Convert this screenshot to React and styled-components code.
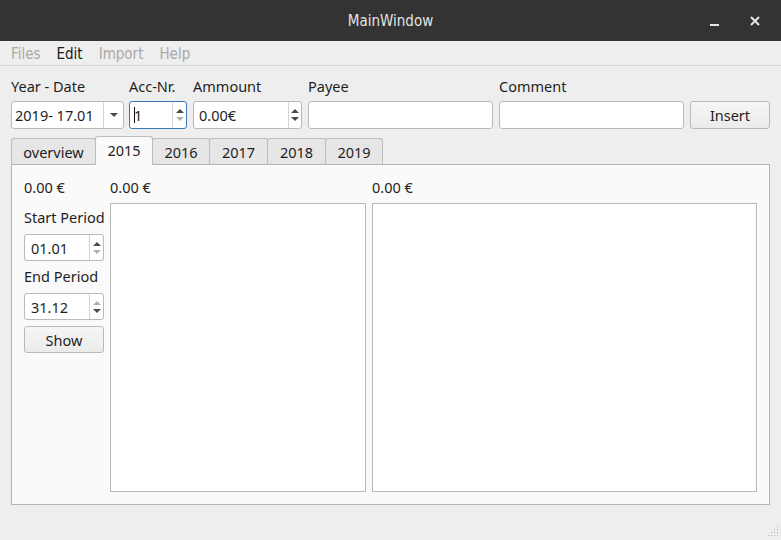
import React from "react";
import styled, { createGlobalStyle } from "styled-components";

const GlobalStyle = createGlobalStyle`
  html, body {
    margin: 0;
    padding: 0;
    background: #eeeeee;
    overflow: hidden;
  }
  * {
    box-sizing: border-box;
  }
`;

const Window = styled.div`
  width: 781px;
  height: 540px;
  display: flex;
  flex-direction: column;
  background: #eeeeee;
  font-family: "Noto Sans", "Open Sans", sans-serif;
  font-size: 14.5px;
  color: #1e1e1e;
  position: relative;
`;

const TitleBar = styled.div`
  height: 41px;
  flex-shrink: 0;
  background: #333333;
  display: grid;
  grid-template-columns: 1fr auto 1fr;
  align-items: center;
  font-family: "DejaVu Sans Condensed", "DejaVu Sans", sans-serif;
`;

const Title = styled.div`
  grid-column: 2;
  color: #e4e4e4;
  font-size: 15px;
`;

const WindowControls = styled.div`
  grid-column: 3;
  justify-self: end;
  display: flex;
  align-items: center;
  gap: 20px;
  padding-right: 16px;
`;

const ControlButton = styled.div`
  width: 20px;
  height: 20px;
  display: flex;
  align-items: center;
  justify-content: center;
`;

const MenuBar = styled.div`
  height: 25px;
  flex-shrink: 0;
  display: flex;
  align-items: center;
  gap: 16px;
  padding: 2px 0 0 11px;
  border-bottom: 1px solid #d8d8d8;
  font-family: "DejaVu Sans Condensed", "DejaVu Sans", sans-serif;
  font-size: 15px;
`;

const MenuItem = styled.span`
  color: ${(p) => (p.$enabled ? "#1a1a1a" : "#a9a9a9")};
`;

const Form = styled.div`
  display: flex;
  padding: 10px 11px 0 11px;
  align-items: flex-end;
`;

const Field = styled.div`
  display: flex;
  flex-direction: column;
  gap: 5px;
  width: ${(p) => p.$w}px;
  margin-left: ${(p) => p.$gap ?? 0}px;
`;

const Label = styled.div`
  height: 20px;
  line-height: 20px;
  white-space: nowrap;
`;

const Box = styled.div`
  height: ${(p) => p.$h ?? 28}px;
  border: 1px solid ${(p) => (p.$focus ? "#3b78b8" : "#b9b9b9")};
  border-radius: 3px;
  background: #ffffff;
  display: flex;
  align-items: stretch;
`;

const BoxText = styled.div`
  flex: 1;
  display: flex;
  align-items: center;
  padding-left: ${(p) => p.$pad ?? 5}px;
  white-space: nowrap;
`;

const Caret = styled.span`
  display: inline-block;
  width: 1px;
  height: 16px;
  background: #111;
  margin-right: -1px;
`;

const ComboButton = styled.div`
  width: 20px;
  border-left: 1px solid #d4d4d4;
  display: flex;
  align-items: center;
  justify-content: center;
`;

const SpinButtons = styled.div`
  width: ${(p) => p.$w ?? 14}px;
  border-left: 1px solid #d4d4d4;
  display: flex;
  flex-direction: column;
  align-items: center;
  justify-content: center;
  gap: 4px;
`;

const Arrow = styled.div`
  width: 0;
  height: 0;
  border-left: 4px solid transparent;
  border-right: 4px solid transparent;
  ${(p) =>
    p.$up
      ? `border-bottom: 4px solid ${p.$dim ? "#b0b0b0" : "#4a4a4a"};`
      : `border-top: 4px solid ${p.$dim ? "#b0b0b0" : "#4a4a4a"};`}
`;

const Button = styled.div`
  height: ${(p) => p.$h ?? 28}px;
  border: 1px solid #b9b9b9;
  border-radius: 3px;
  background: linear-gradient(#f6f6f6, #ebebeb);
  display: flex;
  align-items: center;
  justify-content: center;
`;

const TabArea = styled.div`
  margin: 7px 11px 0 11px;
  display: flex;
  flex-direction: column;
`;

const TabBar = styled.div`
  display: flex;
  align-items: flex-end;
  height: 29px;
  margin-bottom: -1px;
  position: relative;
  z-index: 1;
`;

const Tab = styled.div`
  height: ${(p) => (p.$active ? 29 : 27)}px;
  width: ${(p) => p.$w}px;
  display: flex;
  align-items: center;
  justify-content: center;
  border: 1px solid #bdbdbd;
  border-bottom: ${(p) => (p.$active ? "none" : "1px solid #b5b5b5")};
  margin-left: ${(p) => (p.$first ? 0 : -1)}px;
  border-radius: 3px 3px 0 0;
  background: ${(p) => (p.$active ? "#fafafa" : "#e6e6e6")};
  padding-bottom: ${(p) => (p.$active ? 2 : 0)}px;
`;

const Pane = styled.div`
  height: 341px;
  border: 1px solid #b5b5b5;
  background: #fafafa;
  display: flex;
  gap: 6px;
  padding: 12px 12px 12px 12px;
`;

const SideColumn = styled.div`
  width: 80px;
  display: flex;
  flex-direction: column;
`;

const Amount = styled.div`
  height: 20px;
  line-height: 20px;
  margin-bottom: 6px;
  white-space: nowrap;
`;

const SideLabel = styled.div`
  height: 20px;
  line-height: 20px;
  margin: ${(p) => p.$top}px 0 7px;
  white-space: nowrap;
`;

const ShowButton = styled(Button)`
  margin-top: 6px;
`;

const ListColumn = styled.div`
  width: ${(p) => p.$w}px;
  display: flex;
  flex-direction: column;
`;

const ListBox = styled.div`
  flex: 1;
  border: 1px solid #b9b9b9;
  background: #ffffff;
`;

const SizeGrip = styled.svg`
  position: absolute;
  right: 2px;
  bottom: 2px;
`;

const Spin = ({ value, upDim, downDim, focus, caret, pad, btn, h }) => (
  <Box $focus={focus} $h={h}>
    <BoxText $pad={pad}>
      {caret && <Caret />}
      {value}
    </BoxText>
    <SpinButtons $w={btn}>
      <Arrow $up $dim={upDim} />
      <Arrow $dim={downDim} />
    </SpinButtons>
  </Box>
);

const tabs = [
  { label: "overview", w: 85 },
  { label: "2015", w: 58, active: true },
  { label: "2016", w: 58 },
  { label: "2017", w: 59 },
  { label: "2018", w: 59 },
  { label: "2019", w: 58 },
];

const gripDots = [
  [12, 2],
  [9, 5],
  [12, 5],
  [6, 8],
  [9, 8],
  [12, 8],
  [3, 11],
  [6, 11],
  [9, 11],
  [12, 11],
];

export default function App() {
  return (
    <Window>
      <GlobalStyle />
      <TitleBar>
        <Title>MainWindow</Title>
        <WindowControls>
          <ControlButton>
            <svg width="12" height="12" viewBox="0 0 12 12">
              <rect x="1" y="9" width="9" height="2" fill="#e6e6e6" />
            </svg>
          </ControlButton>
          <ControlButton>
            <svg width="12" height="12" viewBox="0 0 12 12">
              <path d="M2 2 L10 10 M10 2 L2 10" stroke="#e6e6e6" strokeWidth="2" />
            </svg>
          </ControlButton>
        </WindowControls>
      </TitleBar>

      <MenuBar>
        <MenuItem>Files</MenuItem>
        <MenuItem $enabled>Edit</MenuItem>
        <MenuItem>Import</MenuItem>
        <MenuItem>Help</MenuItem>
      </MenuBar>

      <Form>
        <Field $w={113}>
          <Label>Year - Date</Label>
          <Box>
            <BoxText $pad={3}>2019- 17.01</BoxText>
            <ComboButton>
              <Arrow />
            </ComboButton>
          </Box>
        </Field>
        <Field $w={58} $gap={5}>
          <Label>Acc-Nr.</Label>
          <Spin value="1" focus caret downDim pad={4} />
        </Field>
        <Field $w={109} $gap={6}>
          <Label>Ammount</Label>
          <Spin value="0.00€" pad={5} btn={13} />
        </Field>
        <Field $w={185} $gap={6}>
          <Label>Payee</Label>
          <Box />
        </Field>
        <Field $w={185} $gap={6}>
          <Label>Comment</Label>
          <Box />
        </Field>
        <Field $w={80} $gap={6}>
          <Button>Insert</Button>
        </Field>
      </Form>

      <TabArea>
        <TabBar>
          {tabs.map((t, i) => (
            <Tab key={t.label} $w={t.w} $active={t.active} $first={i === 0}>
              {t.label}
            </Tab>
          ))}
        </TabBar>
        <Pane>
          <SideColumn>
            <Amount>0.00 €</Amount>
            <SideLabel $top={4}>Start Period</SideLabel>
            <Spin value="01.01" downDim pad={6} h={27} />
            <SideLabel $top={5}>End Period</SideLabel>
            <Spin value="31.12" upDim pad={6} h={27} />
            <ShowButton $h={27}>Show</ShowButton>
          </SideColumn>
          <ListColumn $w={256}>
            <Amount>0.00 €</Amount>
            <ListBox />
          </ListColumn>
          <ListColumn $w={385}>
            <Amount>0.00 €</Amount>
            <ListBox />
          </ListColumn>
        </Pane>
      </TabArea>

      <SizeGrip width="14" height="14" viewBox="0 0 14 14">
        {gripDots.map(([x, y]) => (
          <rect key={`${x}-${y}`} x={x} y={y} width="1" height="1" fill="#b4b4b4" />
        ))}
      </SizeGrip>
    </Window>
  );
}
